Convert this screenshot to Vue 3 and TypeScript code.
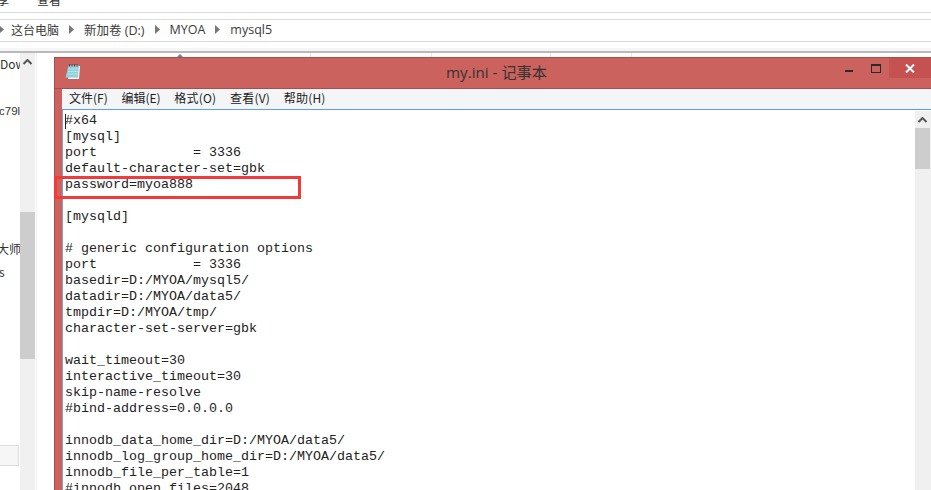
<script setup lang="ts">
const menus = ['文件(F)', '编辑(E)', '格式(O)', '查看(V)', '帮助(H)']
const crumbs = ['这台电脑', '新加卷 (D:)', 'MYOA', 'mysql5']
const text = `#x64
[mysql]
port            = 3336
default-character-set=gbk
password=myoa888

[mysqld]

# generic configuration options
port            = 3336
basedir=D:/MYOA/mysql5/
datadir=D:/MYOA/data5/
tmpdir=D:/MYOA/tmp/
character-set-server=gbk

wait_timeout=30
interactive_timeout=30
skip-name-resolve
#bind-address=0.0.0.0

innodb_data_home_dir=D:/MYOA/data5/
innodb_log_group_home_dir=D:/MYOA/data5/
innodb_file_per_table=1
#innodb_open_files=2048`
</script>

<template>
  <div class="screen">
    <div class="ribbon"><span class="tab first">享</span><span class="tab">查看</span></div>
    <div class="gap"></div>
    <div class="address">
      <template v-for="(c, i) in crumbs" :key="c">
        <svg class="sep" width="5" height="9" viewBox="0 0 5 9"><path d="M0 0l5 4.500L0 9z" fill="#777" /></svg>
        <span class="crumb" :class="{ first: i === 0 }">{{ c }}</span>
      </template>
    </div>
    <div class="gap2"></div>
    <div class="body">
      <aside class="sidebar">
        <div class="nav">
          <span class="nav-item dow">Dow</span>
          <span class="nav-item c79">c79l</span>
          <span class="nav-item master">大师</span>
          <span class="nav-item s">s</span>
          <div class="box"></div>
        </div>
        <div class="track">
          <svg class="up" width="9" height="6" viewBox="0 0 9 6"><path d="M.5 5l4-4 4 4" fill="none" stroke="#555" stroke-width="2" /></svg>
          <div class="thumb"></div>
        </div>
      </aside>
      <main class="files">
        <div class="heads"><b></b><i></i><i></i><i></i><i></i></div>
      </main>
    </div>

    <section class="notepad">
      <header class="title">
        <svg class="nicon" width="16" height="17" viewBox="0 0 16 17">
          <path d="M4 3h11l-1 13H3z" fill="#fff" />
          <path d="M3.500 2.500h10.500l-1 12H.500z" fill="#8fd0dc" />
          <path d="M3 6h10M3 8.500h10M2.500 11h10" stroke="#b7e3ea" />
          <path d="M4.500 1v2.500M7 1v2.500M9.500 1v2.500M12 1v2.500" stroke="#3f4a4d" />
        </svg>
        <span class="cap">my.ini - 记事本</span>
        <div class="btns">
          <span class="min"></span>
          <span class="max"></span>
          <span class="close">
            <svg width="10" height="9" viewBox="0 0 10 9"><path d="M1 .5l8 8M9 .5l-8 8" stroke="#fff" stroke-width="2" /></svg>
          </span>
        </div>
      </header>
      <nav class="menu"><span v-for="m in menus" :key="m">{{ m }}</span></nav>
      <div class="editor">
        <pre class="code">{{ text }}</pre>
        <span class="caret"></span>
        <div class="mark"></div>
        <div class="vbar">
          <svg class="up2" width="9" height="6" viewBox="0 0 9 6"><path d="M.5 5l4-4 4 4" fill="none" stroke="#555" stroke-width="2" /></svg>
          <div class="thumb2"></div>
        </div>
      </div>
    </section>
  </div>
</template>

<style>
html, body { margin: 0; background: #fff; overflow: hidden; }
</style>

<style scoped>
.screen {
  position: relative;
  width: 931px;
  height: 490px;
  overflow: hidden;
  background: #fff;
  font-family: "Noto Sans CJK SC", "Liberation Sans", sans-serif;
  color: #333;
}
.ribbon {
  height: 12px;
  border-bottom: 1px solid #dadada;
  overflow: hidden;
  font-size: 12px;
  line-height: 12px;
}
.tab { display: inline-block; transform: translateY(-6px); }
.tab.first { margin-left: -3px; width: 40px; }
.gap { height: 6px; border-bottom: 1px solid #dcdcdc; }
.address {
  border-bottom: 1px solid #d9d9d9;
  display: flex;
  align-items: center;
  font-size: 12.5px;
  padding-bottom: 2px;
  height: 19px;
  margin-left: -1px;
}
.sep { margin: 0 10px 0 10px; flex: none; }
.sep:first-child { margin-left: 0; margin-right: 7px; }
.crumb { white-space: nowrap; font-family: "Open Sans", "Noto Sans CJK SC", sans-serif; color: #3a3a3a; }
.crumb.first { font-size: 12px; }
.gap2 { height: 9px; background: linear-gradient(#fff 6px, #f6f6f6 6px); border-bottom: 2px solid #b9b9b9; }
.body { display: flex; height: 438px; }
.sidebar { display: flex; width: 37px; flex: none; border-right: 1px solid #f1f1f1; box-sizing: border-box; }
.nav { width: 20px; position: relative; overflow: hidden; font-size: 12px; color: #333; }
.nav-item { position: absolute; white-space: nowrap; line-height: 16px; }
.dow { left: 0; top: 3px; }
.c79 { left: -1px; top: 50px; font-size: 11.5px; font-family: "Liberation Sans", sans-serif; }
.master { left: -3px; top: 188px; }
.s { left: -1px; top: 211px; }
.box { position: absolute; left: -2px; top: 392px; width: 21px; height: 21px; border: 1px solid #dcdcdc; background: #f6f6f6; box-sizing: border-box; }
.track { width: 15px; background: #f0f0f0; position: relative; }
.up { position: absolute; left: 3px; top: 6px; }
.thumb { position: absolute; left: 0; top: 159px; width: 15px; height: 147px; background: #cdcdcd; }
.files { flex: 1; }
.heads { position: relative; }
.heads i { position: absolute; top: 0; width: 1px; height: 5px; background: #dfe8f4; }
.heads i:nth-of-type(1) { left: 273px; }
.heads i:nth-of-type(2) { left: 394px; }
.heads i:nth-of-type(3) { left: 513px; }
.heads i:nth-of-type(4) { left: 594px; }
.heads b { position: absolute; left: 139px; top: 1px; width: 0; height: 0; border: 4px solid transparent; border-top-width: 0; border-bottom-color: #5d87ad; }

.notepad {
  position: absolute;
  left: 54px;
  top: 57px;
  width: 900px;
  height: 440px;
  background: #cb625e;
  border: 1px solid #a64f4c;
  box-sizing: border-box;
  display: flex;
  flex-direction: column;
  padding: 0 0 0 7px;
}
.title { height: 30px; flex: none; position: relative; border-bottom: 1px solid #a64f4c; margin-left: -7px; }
.nicon { position: absolute; left: 10px; top: 5px; }
.cap { font-size: 15.2px; color: #333; position: absolute; left: 391px; top: 3px; line-height: 22px; white-space: nowrap; font-family: "Open Sans", "Noto Sans CJK SC", sans-serif; }
.btns { position: absolute; left: 0; top: 0; }
.min { position: absolute; left: 790px; top: 12px; width: 8px; height: 2px; background: #2a2a2a; }
.max { position: absolute; left: 816px; top: 6px; width: 8px; height: 6px; border: 1px solid #2a2a2a; border-top-width: 2px; }
.close { position: absolute; left: 834px; top: 0; width: 42px; height: 20px; background: #c55251; display: flex; align-items: center; justify-content: center; }
.menu {
  height: 21px;
  flex: none;
  background: #f4f5f7;
  display: flex;
  gap: 13.7px;
  padding-left: 7px;
  font-size: 12px;
  line-height: 17px;
  color: #222;
  border-bottom: 1px solid #5b9fe0;
  box-sizing: border-box;
}
.menu span:nth-child(n+3) { letter-spacing: 0.2px; }
.editor { flex: 1; background: #fff; position: relative; border-left: 1px solid #6aa6e2; }
.code {
  margin: 0;
  padding: 3px 0 0 2px;
  font-family: "Liberation Mono", "DejaVu Sans Mono", monospace;
  font-size: 13.33px;
  line-height: 16px;
  color: #222;
}
.caret { position: absolute; left: 2px; top: 4px; width: 1px; height: 15px; background: #222; }
.mark { position: absolute; left: -9px; top: 66px; width: 247px; height: 23px; border: 3px solid #f23a3a; box-sizing: border-box; }
.vbar { position: absolute; left: 852px; top: 1px; width: 16px; height: 400px; background: #f0f0f0; }
.up2 { position: absolute; left: 3px; top: 6px; }
.thumb2 { position: absolute; left: 0; top: 17px; width: 15px; height: 41px; background: #cdcdcd; }
</style>
